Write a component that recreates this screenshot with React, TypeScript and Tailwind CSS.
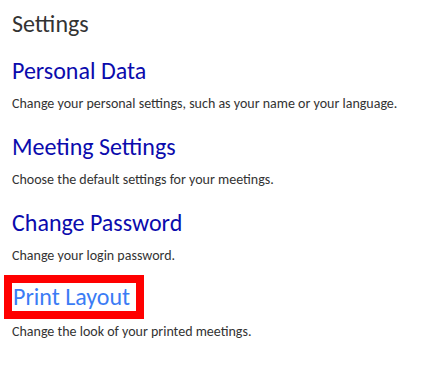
const sections = [
  { title: 'Personal Data', text: 'Change your personal settings, such as your name or your language.' },
  { title: 'Meeting Settings', text: 'Choose the default settings for your meetings.' },
  { title: 'Change Password', text: 'Change your login password.' },
]

export default function App() {
  return (
    <div
      className="min-h-[388px] w-[432px] bg-white px-[12px] pt-[9px] text-[#333]"
      style={{ fontFamily: 'Calibri, Carlito, Lato, sans-serif' }}
    >
      <h1 className="text-[24px] leading-[30px] text-[#333]">Settings</h1>
      <div className="mt-[17px] flex flex-col gap-[18px]">
        {sections.map((s) => (
          <div key={s.title}>
            <a href="#" className="block text-[24px] leading-[30px] text-[#0b0bad]">
              {s.title}
            </a>
            <p className="mt-[8px] text-[14px] leading-[20px]">{s.text}</p>
          </div>
        ))}
        <div className="-mt-[9px]">
          <a
            href="#"
            className="-ml-[8px] block w-[140px] border-[8px] border-[#ff0000] pl-[1px] text-[24px] leading-[28px] text-[#3b7cf5]"
          >
            Print Layout
          </a>
          <p className="mt-[3px] text-[14px] leading-[20px]">Change the look of your printed meetings.</p>
        </div>
      </div>
    </div>
  )
}
